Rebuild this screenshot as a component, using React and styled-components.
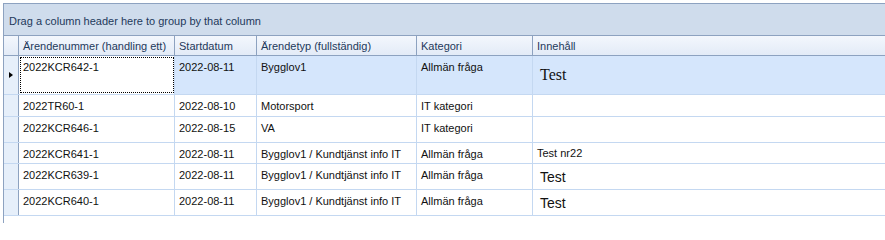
import React from 'react'
import styled, { createGlobalStyle } from 'styled-components'

const Global = createGlobalStyle`
  html, body { margin: 0; background: #fff; }
  body { font-family: "Liberation Sans", Arial, sans-serif; font-size: 11px; }
`

const Grid = styled.div`
  margin: 3px 0 0 3px;
  border-left: 1px solid #8da2c0;
  border-top: 1px solid #8da2c0;
  width: 900px;
  height: 220px;
  box-sizing: border-box;
`

const GroupPanel = styled.div`
  height: 32px;
  background: #cfdcec;
  border-bottom: 1px solid #8da2c0;
  display: flex;
  align-items: center;
  padding: 2px 0 0 5px;
  box-sizing: border-box;
  color: #1e395b;
`

const cols = '15px 156px 82px 160px 116px 1fr'

const HeaderRow = styled.div`
  display: grid;
  grid-template-columns: ${cols};
  height: 19px;
  background: linear-gradient(#f3f7fd, #e3ebf7);
  border-bottom: 1px solid #8da2c0;
`

const HeadCell = styled.div`
  border-right: 1px solid #8da2c0;
  padding: 0 4px;
  display: flex;
  align-items: center;
  color: #1e395b;
  white-space: nowrap;
  overflow: hidden;
`

const Row = styled.div`
  display: grid;
  grid-template-columns: ${cols};
  height: ${p => p.$h}px;
  background: ${p => (p.$selected ? '#d5e6fc' : '#fff')};
  border-bottom: 1px solid #c4d8f1;
  box-sizing: border-box;
`

const Indicator = styled.div`
  background: #e6effa;
  border-right: 1px solid #8da2c0;
  display: flex;
  align-items: center;
  justify-content: center;
`

const Arrow = styled.span`
  width: 0;
  height: 0;
  border-top: 3.5px solid transparent;
  border-bottom: 3.5px solid transparent;
  border-left: 4px solid #000;
`

const Cell = styled.div`
  border-right: 1px solid #c4d8f1;
  padding: 5px 4px 0 4px;
  color: #111;
  white-space: nowrap;
  overflow: hidden;
  box-sizing: border-box;
  ${p => p.$focus && `
    background: #fff;
    outline: 1px dotted #000;
    outline-offset: -2px;
  `}
`

const RichCell = styled(Cell)`
  display: flex;
  align-items: center;
  padding-top: 0;
  padding-left: ${p => (p.$size ? 7 : 4)}px;
  font-family: ${p => (p.$serif ? '"Liberation Serif", "Times New Roman", serif' : '"Liberation Sans", Arial, sans-serif')};
  font-size: ${p => p.$size || 11}px;
`

const rows = [
  { h: 39, nr: '2022KCR642-1', d: '2022-08-11', typ: 'Bygglov1', kat: 'Allmän fråga', inn: 'Test', serif: true, size: 16, sel: true },
  { h: 22, nr: '2022TR60-1', d: '2022-08-10', typ: 'Motorsport', kat: 'IT kategori', inn: '' },
  { h: 26, nr: '2022KCR646-1', d: '2022-08-15', typ: 'VA', kat: 'IT kategori', inn: '' },
  { h: 21, nr: '2022KCR641-1', d: '2022-08-11', typ: 'Bygglov1 / Kundtjänst info IT', kat: 'Allmän fråga', inn: 'Test nr22' },
  { h: 26, nr: '2022KCR639-1', d: '2022-08-11', typ: 'Bygglov1 / Kundtjänst info IT', kat: 'Allmän fråga', inn: 'Test', size: 14 },
  { h: 26, nr: '2022KCR640-1', d: '2022-08-11', typ: 'Bygglov1 / Kundtjänst info IT', kat: 'Allmän fråga', inn: 'Test', size: 14 },
]

export default function App() {
  return (
    <>
      <Global />
      <Grid>
        <GroupPanel>Drag a column header here to group by that column</GroupPanel>
        <HeaderRow>
          <HeadCell />
          <HeadCell>Ärendenummer (handling ett)</HeadCell>
          <HeadCell>Startdatum</HeadCell>
          <HeadCell>Ärendetyp (fullständig)</HeadCell>
          <HeadCell>Kategori</HeadCell>
          <HeadCell>Innehåll</HeadCell>
        </HeaderRow>
        {rows.map((r, i) => (
          <Row key={i} $h={r.h} $selected={r.sel}>
            <Indicator>{r.sel && <Arrow />}</Indicator>
            <Cell $focus={r.sel}>{r.nr}</Cell>
            <Cell>{r.d}</Cell>
            <Cell>{r.typ}</Cell>
            <Cell>{r.kat}</Cell>
            <RichCell $serif={r.serif} $size={r.size}>{r.inn}</RichCell>
          </Row>
        ))}
      </Grid>
    </>
  )
}
